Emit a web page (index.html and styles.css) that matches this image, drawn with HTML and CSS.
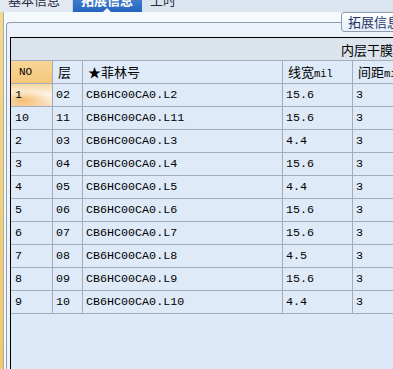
FILE: index.html
```html
<!DOCTYPE html>
<html lang="zh-CN">

<head>
  <meta charset="UTF-8" />
  <title>拓展信息</title>
  <link rel="stylesheet" href="styles.css">
</head>

<body>

  <div class="tabbar">
    <div class="tab first">基本信息</div>
    <div class="tab active">拓展信息</div>
    <div class="tab">工时</div>
  </div>

  <div class="main">
    <div class="side-strip"></div>
    <div class="panel">
      <div class="groupbox">
        <div class="gb-title">拓展信息</div>
        <div class="grid">
          <div class="band"><span>内层干膜表</span></div>

          <div class="row head">
            <div class="cell no-head">NO</div>
            <div class="cell cjk">层</div>
            <div class="cell cjk">★菲林号</div>
            <div class="cell cjk">线宽<span class="mono">mil</span></div>
            <div class="cell cjk">间距<span class="mono">mil</span></div>
          </div>

          <div class="row">
            <div class="cell current">1</div>
            <div class="cell">02</div>
            <div class="cell">CB6HC00CA0.L2</div>
            <div class="cell">15.6</div>
            <div class="cell">3</div>
          </div>
          <div class="row">
            <div class="cell">10</div>
            <div class="cell">11</div>
            <div class="cell">CB6HC00CA0.L11</div>
            <div class="cell">15.6</div>
            <div class="cell">3</div>
          </div>
          <div class="row">
            <div class="cell">2</div>
            <div class="cell">03</div>
            <div class="cell">CB6HC00CA0.L3</div>
            <div class="cell">4.4</div>
            <div class="cell">3</div>
          </div>
          <div class="row">
            <div class="cell">3</div>
            <div class="cell">04</div>
            <div class="cell">CB6HC00CA0.L4</div>
            <div class="cell">15.6</div>
            <div class="cell">3</div>
          </div>
          <div class="row">
            <div class="cell">4</div>
            <div class="cell">05</div>
            <div class="cell">CB6HC00CA0.L5</div>
            <div class="cell">4.4</div>
            <div class="cell">3</div>
          </div>
          <div class="row">
            <div class="cell">5</div>
            <div class="cell">06</div>
            <div class="cell">CB6HC00CA0.L6</div>
            <div class="cell">15.6</div>
            <div class="cell">3</div>
          </div>
          <div class="row">
            <div class="cell">6</div>
            <div class="cell">07</div>
            <div class="cell">CB6HC00CA0.L7</div>
            <div class="cell">15.6</div>
            <div class="cell">3</div>
          </div>
          <div class="row">
            <div class="cell">7</div>
            <div class="cell">08</div>
            <div class="cell">CB6HC00CA0.L8</div>
            <div class="cell">4.5</div>
            <div class="cell">3</div>
          </div>
          <div class="row">
            <div class="cell">8</div>
            <div class="cell">09</div>
            <div class="cell">CB6HC00CA0.L9</div>
            <div class="cell">15.6</div>
            <div class="cell">3</div>
          </div>
          <div class="row">
            <div class="cell">9</div>
            <div class="cell">10</div>
            <div class="cell">CB6HC00CA0.L10</div>
            <div class="cell">4.4</div>
            <div class="cell">3</div>
          </div>
        </div>
      </div>
    </div>
  </div>

</body>

</html>
```

FILE: styles.css
```css
html,
body {
  margin: 0;
  padding: 0;
}

body {
  width: 393px;
  height: 369px;
  overflow: hidden;
  background: #f6f9fc;
  font-family: "Liberation Mono", "Noto Sans CJK SC", monospace;
  color: #000;
}

/* top tab strip, only the lower part is visible */
.tabbar {
  display: flex;
  height: 12px;
  overflow: hidden;
  background: #dbe5f0;
}

.tab {
  height: 26px;
  margin-top: -13px;
  line-height: 26px;
  padding: 0 8px;
  font-family: "Noto Sans CJK SC", sans-serif;
  font-size: 13px;
  color: #1d2b3d;
  white-space: nowrap;
  position: relative;
}

.tab.first {
  width: 56px;
  background: #e3e9f1;
  border-right: 1px solid #c8d3e0;
}

.tab.active {
  width: 53px;
  background: linear-gradient(#5b93dd, #2462bd);
  color: #fff;
  font-weight: bold;
}

.tab.active::after {
  content: "";
  position: absolute;
  left: 29px;
  bottom: 0;
  border-left: 5px solid transparent;
  border-right: 5px solid transparent;
  border-bottom: 5px solid #f6f9fc;
}

.main {
  display: flex;
  height: 357px;
}

.side-strip {
  width: 3px;
  background: linear-gradient(#f6d889, #f2c965);
}

.panel {
  flex: 1;
  display: flex;
  flex-direction: column;
  border-left: 1px solid #a5aebb;
  padding: 10px 0 0 2px;
  min-width: 0;
}

.groupbox {
  flex: 1;
  position: relative;
  display: flex;
  flex-direction: column;
  border: 1px solid #8f9db2;
  border-right: none;
  border-bottom: none;
  border-radius: 4px 0 0 0;
  background: #ecf2fa;
  padding: 14px 0 0 3px;
  min-width: 0;
}

.gb-title {
  position: absolute;
  top: -11px;
  left: 334px;
  width: 60px;
  height: 18px;
  line-height: 18px;
  padding-left: 6px;
  border: 1px solid #8f9db2;
  border-radius: 3px;
  background: linear-gradient(#ffffff, #e6edf6);
  font-family: "Noto Sans CJK SC", sans-serif;
  font-size: 13px;
  color: #1c3566;
  white-space: nowrap;
}

.grid {
  flex: 1;
  border-top: 1px solid #000;
  border-left: 1px solid #000;
  background: #dce9f9;
  overflow: hidden;
}

.band {
  height: 22px;
  line-height: 24px;
  background: #dbe3ed;
  border-bottom: 1px solid #a3aebc;
  padding-left: 330px;
  white-space: nowrap;
  font-family: "Noto Sans CJK SC", sans-serif;
  font-size: 13px;
}

.row {
  display: grid;
  grid-template-columns: 41px 29px 199px 69px 80px;
  column-gap: 1px;
  width: 422px;
  background: #a3aebc;
  border-bottom: 1px solid #a3aebc;
}

.cell {
  height: 22px;
  line-height: 22px;
  padding-left: 3px;
  background: #dfeaf9;
  font-size: 11.7px;
  white-space: nowrap;
  overflow: hidden;
}

.row .cell:first-child {
  padding-left: 4px;
}

.head .cell {
  padding-left: 5px;
}

.cjk {
  font-family: "Noto Sans CJK SC", sans-serif;
  font-size: 13px;
}

.mono {
  font-family: "Liberation Mono", monospace;
  font-size: 10.5px;
}

.row.head .no-head {
  padding-left: 8px;
  background: linear-gradient(#f9d597, #f5c77c);
  font-size: 11px;
}

.cell.current {
  background:
    radial-gradient(ellipse 26px 10px at 30% 75%, #f5bd6e, rgba(245, 189, 110, 0) 100%),
    linear-gradient(#f7d6a3, #fdf1e2 45%, #fbe6c8 80%, #f6d9b0);
}
```
